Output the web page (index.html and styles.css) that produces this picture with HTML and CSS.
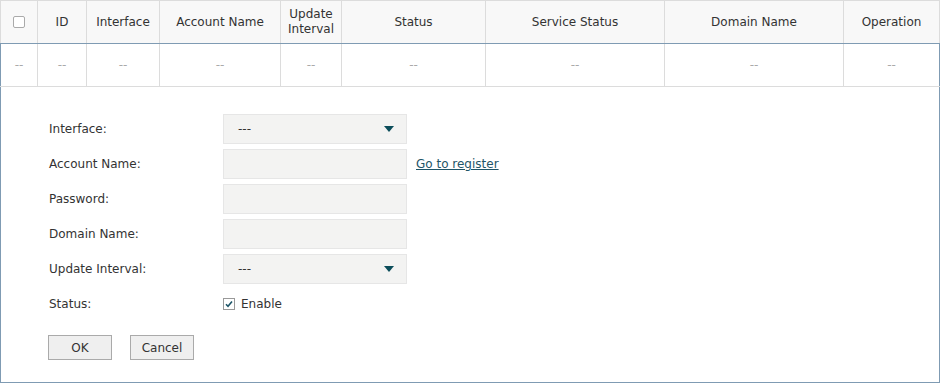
FILE: index.html
```html
<!DOCTYPE html>
<html lang="en">
<head>
  <meta charset="UTF-8" />
  <title>Dynamic DNS</title>
  <link rel="stylesheet" href="styles.css">
</head>
<body>
  <div class="wrap">
    <table class="grid">
      <colgroup>
        <col style="width:37px">
        <col style="width:49px">
        <col style="width:73px">
        <col style="width:121px">
        <col style="width:61px">
        <col style="width:144px">
        <col style="width:179px">
        <col style="width:179px">
        <col>
      </colgroup>
      <thead>
        <tr>
          <th><span class="box"></span></th>
          <th>ID</th>
          <th>Interface</th>
          <th>Account Name</th>
          <th>Update Interval</th>
          <th>Status</th>
          <th>Service Status</th>
          <th>Domain Name</th>
          <th>Operation</th>
        </tr>
      </thead>
      <tbody>
        <tr>
          <td>--</td><td>--</td><td>--</td><td>--</td><td>--</td>
          <td>--</td><td>--</td><td>--</td><td>--</td>
        </tr>
      </tbody>
    </table>

    <!-- edit form -->
    <div class="panel">
      <div class="row">
        <label>Interface:</label>
        <div class="select">---<span class="arrow"></span></div>
      </div>
      <div class="row">
        <label>Account Name:</label>
        <div class="field"></div>
        <a class="link" href="#">Go to register</a>
      </div>
      <div class="row">
        <label>Password:</label>
        <div class="field"></div>
      </div>
      <div class="row">
        <label>Domain Name:</label>
        <div class="field"></div>
      </div>
      <div class="row">
        <label>Update Interval:</label>
        <div class="select">---<span class="arrow"></span></div>
      </div>
      <div class="row status">
        <label>Status:</label>
        <span class="check">
          <svg width="8" height="8" viewBox="0 0 8 8"><path d="M1 4.2 L3 6.2 L7 1.5" fill="none" stroke="#1d5568" stroke-width="1.6"/></svg>
        </span>
        <span class="enable">Enable</span>
      </div>
      <div class="buttons">
        <button>OK</button>
        <button>Cancel</button>
      </div>
    </div>
  </div>
</body>
</html>
```

FILE: styles.css
```css
body {
  margin: 0;
  font-family: "DejaVu Sans", Verdana, sans-serif;
  font-size: 12px;
  color: #333;
  background: white;
}
.wrap {
  width: 940px;
}
.grid {
  width: 940px;
  border-collapse: collapse;
  table-layout: fixed;
}
.grid th {
  height: 42px;
  padding: 0 2px;
  background: #f8f8f8;
  font-weight: normal;
  color: #333;
  line-height: 15px;
  border: 1px solid #dcdcdc;
  border-bottom: 1px solid #7f9bb3;
}
.grid td {
  height: 42px;
  padding: 0;
  text-align: center;
  color: #aaa;
  border: 1px solid #dcdcdc;
}
.grid td:first-child {
  border-left-color: #7f9bb3;
}
.grid td:last-child {
  border-right-color: #7f9bb3;
}
.box {
  display: inline-block;
  width: 10px;
  height: 10px;
  border: 1px solid #aaa;
  border-radius: 2px;
  background: white;
  vertical-align: middle;
}
.panel {
  border: 1px solid #7f9bb3;
  border-top: none;
  padding: 27px 0 22px 47px;
  height: 246px;
}
.row {
  display: flex;
  align-items: center;
  height: 30px;
  margin-bottom: 5px;
}
.row label {
  width: 174px;
  padding-left: 1px;
}
.field, .select {
  width: 182px;
  height: 28px;
  background: #f3f3f2;
  border: 1px solid #e6e6e6;
}
.select {
  display: flex;
  align-items: center;
  justify-content: space-between;
  padding: 0 12px 0 14px;
  width: 156px;
  color: #333;
}
.arrow {
  width: 0;
  height: 0;
  border-left: 5px solid transparent;
  border-right: 5px solid transparent;
  border-top: 6px solid #0b4d5a;
}
.link {
  margin-left: 9px;
  color: #1f5568;
  text-decoration: underline;
}
.status {
  margin-top: 5px;
}
.check {
  display: inline-flex;
  align-items: center;
  justify-content: center;
  width: 10px;
  height: 10px;
  border: 1px solid #999;
  background: white;
}
.enable {
  margin-left: 6px;
}
.buttons {
  display: flex;
  gap: 18px;
  margin-top: 16px;
}
button {
  width: 64px;
  height: 25px;
  padding: 0;
  background: #efefef;
  border: 1px solid #aaa;
  font-family: inherit;
  font-size: 12px;
  color: #333;
}
```
